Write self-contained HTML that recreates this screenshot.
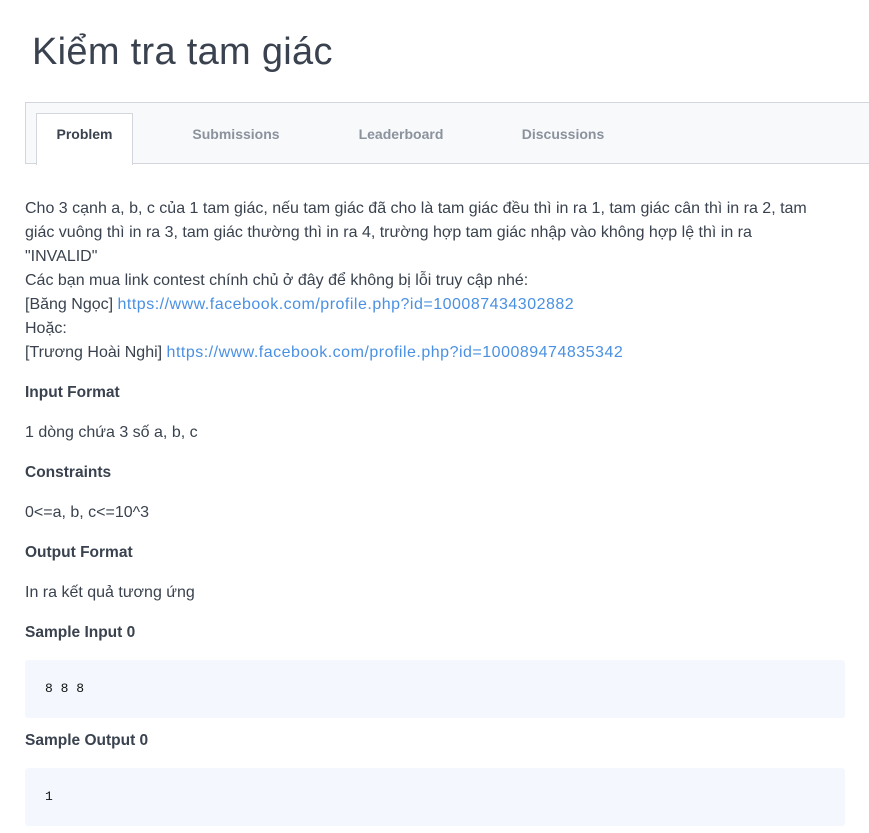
<!DOCTYPE html>
<html><head><meta charset="utf-8"><style>
html,body{margin:0;padding:0;background:#fff;width:869px;height:833px;overflow:hidden}
body{font-family:"Liberation Sans",sans-serif;color:#39424e;position:relative}
h1{position:absolute;left:32px;top:31px;margin:0;font-size:38px;font-weight:normal;letter-spacing:0.3px;color:#39424e}
.tabs{position:absolute;left:25px;top:102px;width:850px;height:60px;background:#f8f9fa;border:1px solid #d3d6dc;border-right:none}
.tab{position:absolute;top:0;height:49px;line-height:42px;font-size:14px;color:#8a929e;text-align:center;font-weight:bold}
.tab.active{left:10px;top:10px;width:95px;height:51px;background:#fff;border:1px solid #d3d6dc;border-bottom:none;color:#39424e;line-height:40px}
.c{position:absolute;left:25px;width:840px;font-size:16px;line-height:24px;white-space:nowrap}
a{color:#4a90e2;text-decoration:none;letter-spacing:0.5px}
.h{font-weight:bold;font-size:15.5px;color:#39424e}
.pre{position:absolute;left:25px;width:820px;height:58px;background:#f4f8fe;border-radius:3px;font-family:"Liberation Mono",monospace;font-size:13px;color:#111;line-height:58px;padding-left:20px;box-sizing:border-box}
</style></head><body>
<h1>Kiểm tra tam giác</h1>
<div class="tabs">
<div class="tab active">Problem</div>
<div class="tab" style="left:160px;width:100px;top:10px">Submissions</div>
<div class="tab" style="left:325px;width:100px;top:10px">Leaderboard</div>
<div class="tab" style="left:487px;width:100px;top:10px">Discussions</div>
</div>
<div class="c" style="top:197px">Cho 3 cạnh a, b, c của 1 tam giác, nếu tam giác đã cho là tam giác đều thì in ra 1, tam giác cân thì in ra 2, tam<br>giác vuông thì in ra 3, tam giác thường thì in ra 4, trường hợp tam giác nhập vào không hợp lệ thì in ra<br>"INVALID"<br>Các bạn mua link contest chính chủ ở đây để không bị lỗi truy cập nhé:<br>[Băng Ngọc] <a>https://www.facebook.com/profile.php?id=100087434302882</a><br>Hoặc:<br>[Trương Hoài Nghi] <a>https://www.facebook.com/profile.php?id=100089474835342</a></div>
<div class="c h" style="top:381px">Input Format</div>
<div class="c" style="top:421px">1 dòng chứa 3 số a, b, c</div>
<div class="c h" style="top:461px">Constraints</div>
<div class="c" style="top:501px">0&lt;=a, b, c&lt;=10^3</div>
<div class="c h" style="top:541px">Output Format</div>
<div class="c" style="top:581px">In ra kết quả tương ứng</div>
<div class="c h" style="top:621px">Sample Input 0</div>
<div class="pre" style="top:660px">8 8 8</div>
<div class="c h" style="top:729px">Sample Output 0</div>
<div class="pre" style="top:768px">1</div>
</body></html>
